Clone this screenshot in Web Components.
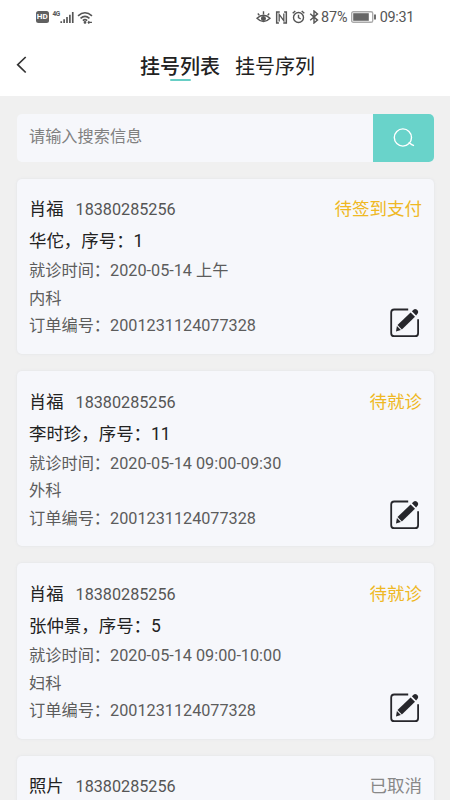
<!DOCTYPE html>
<html lang="zh-CN">
<head>
<meta charset="utf-8">
<meta name="viewport" content="width=device-width">
<title>挂号列表</title>
<style>
html,body{margin:0;height:100%;overflow:hidden;background:#f0f0f0}
body{font-family:Roboto,"Noto Sans CJK SC",sans-serif;color:#222}
</style>
</head>
<body>
<registration-page></registration-page>
<script>
function define(name, html, setup) {
  const template = document.createElement('template');
  template.innerHTML = html;
  customElements.define(name, class extends HTMLElement {
    connectedCallback() {
      if (this.shadowRoot) return;
      const root = this.attachShadow({mode: 'open'});
      root.append(template.content.cloneNode(true));
      if (setup) setup(this, root);
    }
  });
}

define('status-bar', `
<style>
:host{display:flex;height:34px;box-sizing:border-box;padding:0 36px 0 36px;justify-content:space-between;align-items:center;color:#555;background:#fff}
div{display:flex;align-items:center}
svg{display:block;fill:none;stroke:#555;stroke-width:1.4;flex:none}
.battery{font-size:14.4px;line-height:20px;margin-left:2px;padding-top:1px}
.clock{font-size:14.4px;line-height:20px;letter-spacing:-.3px;margin-left:4px;padding-top:1px}
.hd{width:12.5px;height:12px;border-radius:2.5px;background:#606060;color:#fff;font:bold 8px/12px Roboto,sans-serif;text-align:center;justify-content:center}
.net{font:bold 6.5px/8px Roboto,sans-serif;align-self:flex-start;margin:-1px 0 0 4px;letter-spacing:-.4px}
</style>
<div><div class="hd">HD</div><div class="net">4G</div>
<svg width="14" height="13" viewBox="0 0 15 14"><path stroke-width="1.8" d="M1.3 11v2M4.4 9v4M7.5 6.5v6.5M10.6 4v9M13.7 1v12"/></svg>
<svg style="margin-left:3px" width="16" height="13" viewBox="0 0 17 14"><path stroke-width="1.7" d="M1 5.2Q8.5-1.4 16 5.2M3.7 8Q8.5 3.6 13.3 8M6.2 10.3Q8.5 8.3 10.8 10.3"/><circle cx="8.5" cy="12.3" r=".8" fill="#555"/><path d="M12 12.3h4M13 11l-1 1.3 1 1.3"/></svg></div>
<div>
<svg width="15" height="14" viewBox="0 0 15 14"><path d="M1 8.3Q7.5 2.2 14 8.3 7.5 15 1 8.3zM1.8 3.6l1.5 1.6M7.5 1.2v3M13.2 3.6l-1.5 1.6"/><circle cx="7.5" cy="8.5" r="1.8" fill="#555"/></svg>
<svg style="margin-left:3.5px" width="13" height="13" viewBox="0 0 13 14"><path d="M4.6 1H1.3v12h2.4M8.4 13h3.3V1H9.3" stroke-width="1.6"/><path d="M4 11.2V3.7l5 6.8V2.8" stroke-width="1.4"/></svg>
<svg style="margin-left:4.5px" width="13" height="14" viewBox="0 0 13 14"><circle cx="6.5" cy="7.5" r="5"/><path d="M6.5 4.7v3L8.7 9M.7 3.2L3.3 1M12.3 3.2L9.7 1"/></svg>
<svg style="margin-left:3.5px" width="10" height="14" viewBox="0 0 10 14"><path d="M1.2 3.7l7.3 6.4L5 13V1l3.5 2.9-7.3 6.4"/></svg>
<span class="battery">87%</span>
<svg style="margin-left:3px" width="25" height="12" viewBox="0 0 25 12"><rect x=".7" y=".7" width="21" height="10.6" rx="1.6" stroke="#aaa"/><path d="M2.2 2.2h15.6v7.6H2.2z" fill="#666" stroke="none"/><path d="M24 3.5v5" stroke-width="1.7"/></svg>
<span class="clock">09:31</span></div>`);

define('page-tab', `
<style>
:host{display:flex;flex-direction:column;align-items:center;height:34px;font-size:20px;line-height:28px;color:#222}
:host([active]){font-weight:500}
i{width:21px;height:2.5px;margin-top:-2.4px;border-radius:1px}
:host([active]) i{background:#67cec5}
</style><span><slot></slot></span><i></i>`);

define('nav-bar', `
<style>
:host{display:grid;grid-template-columns:140px 1fr;height:62px;background:#fff}
svg{display:block;margin:22px 0 0 16px;fill:none;stroke:#333;stroke-width:1.7}
div{display:flex;gap:15px;padding-top:19px}
</style>
<svg width="11" height="18" viewBox="0 0 11 18"><path d="M9.7 1L1.7 8.7l8 7.8"/></svg>
<div><slot></slot></div>`);

define('search-box', `
<style>
:host{display:flex;height:48px;border-radius:5px;overflow:hidden;background:#f6f7fb}
span{flex:1;padding:0 12px;font-size:16.2px;line-height:45px;color:#808080}
b{display:flex;width:60.5px;align-items:center;justify-content:center;background:#69d3ca}
svg{fill:none;stroke:#fff;stroke-width:1.4}
</style>
<span><slot></slot></span><b><svg width="23" height="20" viewBox="0 0 23 20"><circle cx="10.9" cy="9.5" r="8.6"/><path d="M16.7 14.2l1.5 1.2q1.2 1.2 3.8 2.2"/></svg></b>`);

define('edit-icon', `
<style>:host{display:block;width:30px;height:30px}svg{display:block}</style>
<svg width="30" height="30" viewBox="0 0 30 30" fill="none" stroke="#26262b" stroke-width="1.8"><path d="M18.2 1.5H4.2Q1.2 1.5 1.2 4.5V25.2Q1.2 28.2 4.2 28.2H25.1Q28.1 28.2 28.1 25.2V11.3"/><g fill="#26262b" stroke="none"><path d="M20.6 4.5l4.4 4.3-13.1 12.6-4.4-4.4z"/><path d="M6.9 18l4 3.9-4.9 1.7z"/><path d="M21.9 3.3L23.8 1.4q1.4-.9 2.9.2l1 1q1.1 1.4 0 2.8L26.1 7.5z"/></g></svg>`);

define('registration-card', `
<style>
:host{display:grid;grid-template-columns:1fr auto;height:175.4px;box-sizing:border-box;padding:14.5px 11.5px 13.9px 12px;border-radius:5px;background:#f6f7fb;box-shadow:0 0 2px 1px #e8e9eb}
.head{height:32px;line-height:32px;display:flex;align-items:baseline;gap:12px;font-size:17.3px}
.phone{font-size:16.2px;color:#555}
.status{font-size:17.5px;line-height:32px;color:#efb823;text-align:right}
:host([cancelled]) .status{color:#888}
.doctor{height:32px;line-height:32px;font-size:17.45px}
.detail{height:27.5px;line-height:27.5px;font-size:16.23px;color:#5c5c5c;white-space:nowrap}
edit-icon{align-self:end;justify-self:end;margin:0 2.5px 2.3px 0}
</style>
<div class="head"><span class="name"></span><span class="phone"></span></div>
<div class="status"></div>
<div><div class="doctor"></div><div class="detail time"></div><div class="detail dept"></div><div class="detail order"></div></div>
<edit-icon></edit-icon>`, (host, root) => {
  const d = host.dataset;
  const put = (key, text) => root.querySelector('.' + key).textContent = text;
  put('name', d.name); put('phone', '18380285256'); put('status', d.status);
  if (!d.doctor) return;
  put('doctor', d.doctor + '，序号：' + d.number);
  put('time', '就诊时间：2020-05-14 ' + d.time);
  put('dept', d.dept);
  put('order', '订单编号：2001231124077328');
});

define('registration-page', `
<style>
:host{display:block;height:800px;overflow:hidden;background:#f0f0f0}
main{display:flex;flex-direction:column;gap:17px;padding:17.7px 16.5px 0 17px}
</style>
<status-bar></status-bar>
<nav-bar><page-tab active>挂号列表</page-tab><page-tab>挂号序列</page-tab></nav-bar>
<main>
<search-box>请输入搜索信息</search-box>
<registration-card data-name="肖福" data-status="待签到支付" data-doctor="华佗" data-number="1" data-time="上午" data-dept="内科"></registration-card>
<registration-card data-name="肖福" data-status="待就诊" data-doctor="李时珍" data-number="11" data-time="09:00-09:30" data-dept="外科"></registration-card>
<registration-card data-name="肖福" data-status="待就诊" data-doctor="张仲景" data-number="5" data-time="09:00-10:00" data-dept="妇科"></registration-card>
<registration-card cancelled data-name="照片" data-status="已取消"></registration-card>
</main>`);
</script>
</body>
</html>
